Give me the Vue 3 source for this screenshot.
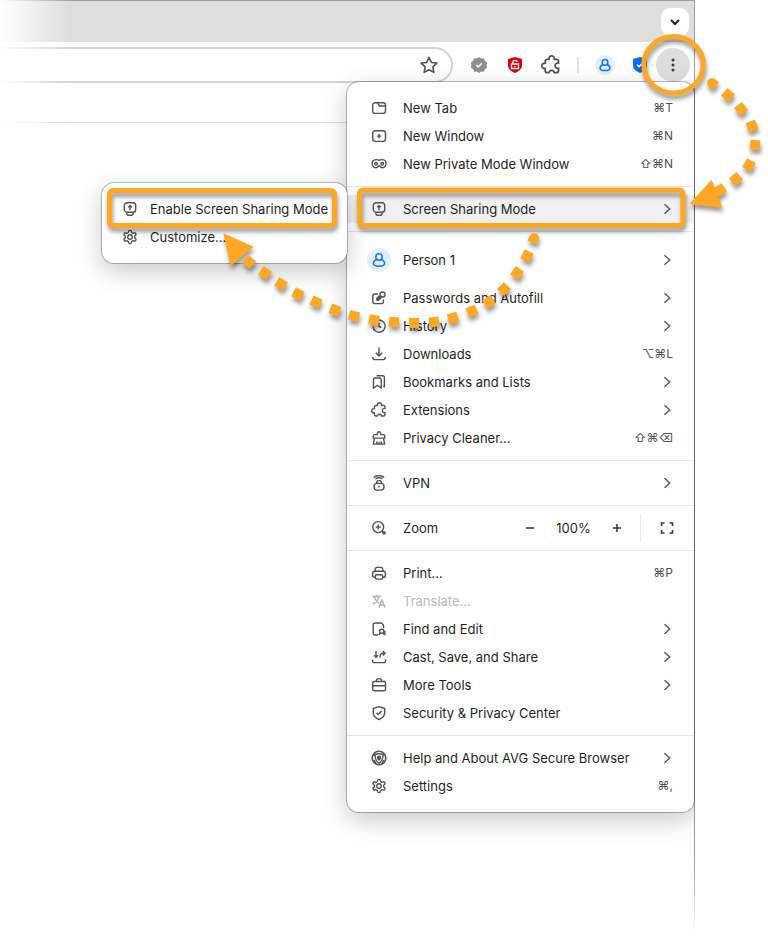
<script setup>
const icons = {
  tab: '<rect x="1.7" y="2.8" width="12.8" height="10.6" rx="2.4"/><path d="M6.5 2.9 8 5.4Q8.3 6 9 6h5.3"/>',
  window: '<rect x="1.7" y="2.8" width="12.8" height="10.6" rx="2.6"/><path d="M8.1 5.9v4.4M5.9 8.1h4.4"/>',
  mask: '<path d="M8.1 4.3C6.5 3.4 3.400 3.200 1.900 5c-1.200 1.600-.9 5 1 6.200 1.900 1.100 3.500.5 4.300-.8q.9-1.200 1.800 0c.8 1.300 2.400 1.900 4.300.8 1.900-1.200 2.200-4.600 1-6.200-1.500-1.800-4.600-1.600-6.200-.7z"/><circle cx="5" cy="7.800" r="1.300"/><circle cx="11.200" cy="7.800" r="1.300"/>',
  share: '<rect x="2.300" y="1.700" width="11.400" height="9.500" rx="2.800"/><path d="M4.600 11.500l.5 1.900q.2.800 1 .8h3.800q.8 0 1-.8l.5-1.900M8 9.200V4.600M6.200 6.200 8 4.400l1.800 1.800"/>',
  gear: '<g transform="scale(.6667)" stroke-width="2"><path d="M12.220 2h-.44a2 2 0 0 0-2 2v.18a2 2 0 0 1-1 1.730l-.43.25a2 2 0 0 1-2 0l-.15-.08a2 2 0 0 0-2.730.73l-.22.38a2 2 0 0 0 .73 2.730l.15.1a2 2 0 0 1 1 1.720v.51a2 2 0 0 1-1 1.740l-.15.09a2 2 0 0 0-.73 2.730l.22.38a2 2 0 0 0 2.730.73l.15-.08a2 2 0 0 1 2 0l.43.25a2 2 0 0 1 1 1.730V20a2 2 0 0 0 2 2h.44a2 2 0 0 0 2-2v-.18a2 2 0 0 1 1-1.730l.43-.25a2 2 0 0 1 2 0l.15.08a2 2 0 0 0 2.730-.73l.22-.39a2 2 0 0 0-.73-2.730l-.15-.08a2 2 0 0 1-1-1.740v-.5a2 2 0 0 1 1-1.740l.15-.09a2 2 0 0 0 .73-2.730l-.22-.38a2 2 0 0 0-2.730-.73l-.15.08a2 2 0 0 1-2 0l-.43-.25a2 2 0 0 1-1-1.730V4a2 2 0 0 0-2-2z"/><circle cx="12" cy="12" r="3.400"/></g>',
  person: '<circle cx="8" cy="5" r="3.200"/><path d="M5.700 7.400C3.500 8.400 2.400 10 2.400 11.600 2.400 13.700 5 14.300 8 14.300s5.600-.6 5.600-2.700c0-1.600-1.100-3.200-3.300-4.200"/>',
  key: '<path d="M7 4H4Q1.800 4 1.800 6.200v5.200q0 2.200 2.200 2.200h6.200q2.200 0 2.200-2.200V9.500M5.700 10.200 10 5.900M5.700 10.200l.2-1.900 2.800-2.700M5.700 10.200l2-.1 2.600-2.600"/><circle cx="11.600" cy="4.500" r="2.500"/>',
  history: '<path d="M3.200 4.400A6.100 6.100 0 1 1 2 8.600M2.400 2.600l.5 2.300 2.300-.2M8 4.800v3.600l2.300 1.300"/>',
  download: '<path d="M8 1.500v8.200M4.700 6.700 8 9.900l3.300-3.200M1.800 11v.6q0 2 2 2h8.400q2 0 2-2V11"/>',
  bookmarks: '<path d="M2.500 5.600q0-1.600 1.600-1.600h4.500q1.600 0 1.600 1.600v8.700l-3.800-3-3.900 3zM5.600 1.700h6q1.800 0 1.800 1.800v9.200l-1.200-.9"/>',
  puzzle: '<path d="M3.400 5q0-1.500 1.500-1.500h1.600a2.100 2.100 0 1 1 4 0H12.500q1.500 0 1.500 1.500v1.500a2.100 2.100 0 1 0 0 4v2q0 1.500-1.500 1.500h-2q-.2-1.700-2-1.700T6.500 14H4.900q-1.500 0-1.500-1.500v-1.800a2.100 2.100 0 1 1 0-4z"/>',
  cleaner: '<path d="M6.400 4.600V3.300q0-1.500 1.600-1.500t1.600 1.500v1.300h2.600q1.600 0 1.600 1.600v1.900H2.200V6.200q0-1.600 1.600-1.600zM3.400 8.300l-1 5.800h11.200l-1-5.800M5.600 13.900l.4-2.500M8 13.900v-2.200M10.400 13.900l-.4-2.500"/>',
  vpn: '<rect x="3" y="8.400" width="10" height="6.700" rx="3"/><path d="M5.700 8.300V7.200q0-1.600 2.300-1.600t2.300 1.600v1.100M4.400 4q3.600-2.400 7.200 0M2.800 2.400q5.200-3.500 10.400 0M8 11v1.600"/>',
  zoom: '<circle cx="7.200" cy="7.100" r="5.500"/><path d="M7.200 4.600v5M4.700 7.100h5M11.100 11l1.200 1.200"/><circle cx="13" cy="12.900" r="1.100"/>',
  print: '<path d="M3.800 6.200Q4.200 2.400 6 2.400h4q1.800 0 2.200 3.800M4.300 12.300H3.500q-1.900 0-1.900-1.900V8.100q0-1.900 1.900-1.900h9q1.900 0 1.900 1.900v2.300q0 1.900-1.900 1.900h-.8"/><rect x="4.300" y="9.700" width="7.400" height="4.400" rx="1.500"/>',
  translate: '<path d="M1.300 3.500h8.500M5.500 1.800v1.700M8 3.600C7.300 6.600 4.700 9.400 1.800 11M3.200 3.700c.8 2.600 2.800 5.100 5 6.400M7.800 14.400l3-7.600 3.300 7.600M8.900 12h4.100"/>',
  find: '<path d="M7 14H4.200q-2 0-2-2V4q0-2 2-2h5.200q1.300 0 2.100.9l.5.600q.6.800.6 1.700v2"/><circle cx="10.700" cy="10.300" r="2.100"/><path d="M9.300 12.200 7.700 14M12.100 12.100l1.700 2M13.800 9.500v4.500"/>',
  cast: '<path d="M5 2v6M3 6.300l2 2 2-2M9.200 8.500V7q0-2.700 2.700-2.700h2M11.800 2.100l2.300 2.200-2.300 2.200M1.600 10.600v.8q0 2.200 2.200 2.200h8.600q2.200 0 2.200-2.200v-.8"/>',
  tools: '<rect x="1.700" y="4.500" width="12.800" height="9.300" rx="1.600"/><path d="M5.300 4.300q0-2.400 1.400-2.400h2.600q1.400 0 1.400 2.400M1.800 8.700h12.600"/>',
  shield: '<path d="M8 1.600 13.700 3.500v4.200c0 3.200-2.500 5.500-5.700 6.800-3.200-1.300-5.700-3.600-5.700-6.800V3.500zM5.600 7.700l1.700 1.700 3.300-3.400"/>',
  avg: '<circle cx="8" cy="8" r="6.800" stroke-width="1.600"/><path d="M2.300 5.500q2-1.800 5.700-1.800t5.700 1.800M4 5c.2 4.500 1 6.400 4 8.200 3-1.800 3.800-3.700 4-8.200M3.200 10l2 3.800M12.800 10l-2 3.800M8 6.500v3.500M6.700 6.500v2l1.300 1.500 1.300-1.500v-2z"/>',
  star: '<path d="M8 1.200l2.100 4.500 4.900.6-3.600 3.400.9 4.900L8 12.200l-4.300 2.400.9-4.900L1 6.300l4.900-.6z"/>'
}

const groups = [
  [
    { icon: 'tab', label: 'New Tab', keys: '⌘T' },
    { icon: 'window', label: 'New Window', keys: '⌘N' },
    { icon: 'mask', label: 'New Private Mode Window', keys: '⇧⌘N' }
  ],
  [{ icon: 'share', label: 'Screen Sharing Mode', sub: true, active: true }],
  [
    { icon: 'person', label: 'Person 1', sub: true, profile: true },
    { icon: 'key', label: 'Passwords and Autofill', sub: true },
    { icon: 'history', label: 'History', sub: true },
    { icon: 'download', label: 'Downloads', keys: '⌥⌘L' },
    { icon: 'bookmarks', label: 'Bookmarks and Lists', sub: true },
    { icon: 'puzzle', label: 'Extensions', sub: true },
    { icon: 'cleaner', label: 'Privacy Cleaner…', keys: '⇧⌘⌫' }
  ],
  [{ icon: 'vpn', label: 'VPN', sub: true }],
  [{ icon: 'zoom', label: 'Zoom', zoom: true }],
  [
    { icon: 'print', label: 'Print…', keys: '⌘P' },
    { icon: 'translate', label: 'Translate…', disabled: true },
    { icon: 'find', label: 'Find and Edit', sub: true },
    { icon: 'cast', label: 'Cast, Save, and Share', sub: true },
    { icon: 'tools', label: 'More Tools', sub: true },
    { icon: 'shield', label: 'Security & Privacy Center' }
  ],
  [
    { icon: 'avg', label: 'Help and About AVG Secure Browser', sub: true },
    { icon: 'gear', label: 'Settings', keys: '⌘,' }
  ]
]

const submenu = [
  { icon: 'share', label: 'Enable Screen Sharing Mode' },
  { icon: 'gear', label: 'Customize…' }
]

// Each trail is a row of square dashes, turned to follow the line through its neighbours.
const trails = [
  [[712, 83], [728, 95], [741, 109], [752, 126], [755, 145], [749, 165], [736, 179], [720, 190], [704, 198]],
  [[534, 238], [527, 256], [517, 273], [504, 289], [489, 302], [472, 311], [453, 318], [434, 322], [414, 323],
    [394, 322], [374, 320], [354, 316], [335, 310], [316, 302], [298, 294], [281, 284], [265, 273], [249, 262], [236, 248]]
]
const dashes = trails.flatMap(points =>
  points.slice(0, -1).map(([x, y], i) => {
    const from = points[Math.max(i - 1, 0)]
    const to = points[i + 1]
    const angle = Math.atan2(to[1] - from[1], to[0] - from[0]) * 180 / Math.PI
    return { first: i === 0, transform: `translate(${x} ${y}) rotate(${angle.toFixed(1)})` }
  })
)
</script>

<template>
  <main class="page">
    <div class="browser">
      <div class="chrome">
        <div class="tabstrip">
          <button class="tab-search" aria-label="Search tabs">
            <svg viewBox="0 0 12 12" width="12" height="12"><path d="M2 4l4 4 4-4" /></svg>
          </button>
        </div>
        <div class="toolbar">
          <div class="address">
            <button class="tool" aria-label="Bookmark this page">
              <svg class="icon star" viewBox="0 0 16 16" v-html="icons.star"></svg>
            </button>
          </div>
          <button class="tool" aria-label="Verified site">
            <svg viewBox="0 0 18 18" width="18" height="18">
              <path d="M9 1l2.200 1.600 2.700-.3.900 2.500 2.300 1.400L16.600 9l.5 2.800-2.300 1.400-.9 2.500-2.700-.3L9 17l-2.200-1.600-2.700.3-.9-2.500L.9 11.800 1.400 9 .9 6.200l2.300-1.400.9-2.500 2.700.3z" fill="#8f8f8f" />
              <path d="M6.200 9l2 2 3.700-3.800" fill="none" stroke="#fff" stroke-width="1.400" />
            </svg>
          </button>
          <button class="tool" aria-label="Site protection">
            <svg viewBox="0 0 18 18" width="18" height="18">
              <path d="M9 1 16 3v6.200c0 3.400-2.700 6-7 7.800-4.300-1.800-7-4.400-7-7.800V3z" fill="#e3000f" />
              <path d="M6.800 8V6.500C6.800 3.800 11 3.700 11.200 6M5.500 8h7v4.500h-7zM9 9.700v1.200" fill="none" stroke="#fff" stroke-width="1.300" />
            </svg>
          </button>
          <button class="tool" aria-label="Extensions">
            <svg class="icon large" viewBox="0 0 16 16" v-html="icons.puzzle"></svg>
          </button>
          <span class="tool-divider"></span>
          <button class="tool" aria-label="Profile">
            <span class="avatar"><svg class="icon person" viewBox="0 0 16 16" v-html="icons.person"></svg></span>
          </button>
          <button class="tool narrow" aria-label="Security center">
            <svg viewBox="0 0 18 18" width="18" height="18">
              <path d="M9 1 16 3v6.200c0 3.400-2.700 6-7 7.800-4.300-1.800-7-4.400-7-7.800V3z" fill="#0a6cf5" />
              <path d="M6 8.700l2 2 4-4" fill="none" stroke="#fff" stroke-width="1.500" />
            </svg>
          </button>
          <button class="more" aria-label="Menu">
            <svg viewBox="0 0 4 14" width="4" height="14">
              <circle cx="2" cy="2" r="1.500" /><circle cx="2" cy="7" r="1.500" /><circle cx="2" cy="12" r="1.500" />
            </svg>
          </button>
        </div>
        <div class="content"></div>
      </div>

      <nav class="menu main-menu" aria-label="Browser menu">
        <div v-for="(group, g) in groups" :key="g" class="group">
          <template v-for="item in group" :key="item.label">
            <div v-if="item.zoom" class="row">
              <svg class="icon" viewBox="0 0 16 16" v-html="icons[item.icon]"></svg>
              <span class="label">{{ item.label }}</span>
              <div class="zoom-controls">
                <button class="step" aria-label="Zoom out"><svg viewBox="0 0 10 10" width="10" height="10"><path d="M1 5h8" /></svg></button>
                <span class="level">100%</span>
                <button class="step" aria-label="Zoom in"><svg viewBox="0 0 10 10" width="10" height="10"><path d="M1 5h8M5 1v8" /></svg></button>
                <button class="full" aria-label="Full screen">
                  <svg viewBox="0 0 14 14" width="14" height="14"><path d="M1.500 5V2h3M9.500 2h3v3M12.500 9v3h-3M4.500 12h-3V9" /></svg>
                </button>
              </div>
            </div>
            <button v-else class="row" :class="{ active: item.active, profile: item.profile }" :disabled="item.disabled">
              <span v-if="item.profile" class="avatar big"><svg class="icon person" viewBox="0 0 16 16" v-html="icons.person"></svg></span>
              <svg v-else class="icon" viewBox="0 0 16 16" v-html="icons[item.icon]"></svg>
              <span class="label">{{ item.label }}</span>
              <span v-if="item.keys" class="keys">{{ item.keys }}</span>
              <svg v-if="item.sub" class="chevron" viewBox="0 0 12 12"><path d="M3.500 1.200 8.700 6l-5.200 4.800" /></svg>
            </button>
          </template>
        </div>
      </nav>

      <nav class="menu sub-menu" aria-label="Screen Sharing Mode">
        <button v-for="item in submenu" :key="item.label" class="row">
          <svg class="icon" viewBox="0 0 16 16" v-html="icons[item.icon]"></svg>
          <span class="label">{{ item.label }}</span>
        </button>
      </nav>
    </div>

    <svg class="callouts" viewBox="0 0 768 949" width="768" height="949" aria-hidden="true">
      <g class="outline">
        <ellipse cx="673.500" cy="64.800" rx="29.700" ry="28.200" />
        <rect x="359.500" y="190" width="323.500" height="35.500" rx="3.500" />
        <rect x="109.500" y="190.500" width="225" height="35" rx="3.500" />
      </g>
      <g class="solid">
        <template v-for="(d, i) in dashes" :key="i">
          <path v-if="d.first" :transform="d.transform" d="M5-5H0A5 5 0 0 0 0 5H5z" />
          <rect v-else :transform="d.transform" x="-5" y="-5" width="10" height="10" />
        </template>
        <path d="M689.300 204l22.400-24.300 10.600 28z" />
        <path d="M223.300 233.300l30.400 13.400-23 19.300z" />
      </g>
    </svg>
  </main>
</template>

<style>
body {
  margin: 0;
  background: #fff;
}
</style>

<style scoped>
.page {
  position: relative;
  min-height: 100vh;
  overflow: hidden;
  font-family: Inter, "Liberation Sans", sans-serif;
  font-size: 13px;
  line-height: 20px;
  color: #1f1f1f;
}
button {
  margin: 0;
  padding: 0;
  border: 0;
  background: none;
  font: inherit;
  color: inherit;
}
.browser {
  position: relative;
  margin-right: 73px;
  overflow: hidden;
}
.chrome {
  display: flex;
  flex-direction: column;
  min-height: 100vh;
  box-sizing: border-box;
  border-top: 1px solid #a0a0a0;
  border-right: 1px solid #9c9c9c;
  mask-image: linear-gradient(to right, transparent, #000 70px), linear-gradient(to top, transparent 16px, #000 90px);
  mask-composite: intersect;
}
.tabstrip {
  display: flex;
  justify-content: flex-end;
  padding: 7px 5px 6px;
  background: #dedede;
}
.tab-search {
  display: grid;
  place-items: center;
  width: 28px;
  height: 28px;
  border-radius: 9px;
  background: #fff;
}
.tab-search svg {
  fill: none;
  stroke: #1f1f1f;
  stroke-width: 2;
}
.toolbar {
  display: flex;
  align-items: center;
  height: 36px;
  padding: 5px 4px 39px 0;
  border-bottom: 1px solid #dcdce0;
}
.address {
  display: flex;
  flex: 1;
  justify-content: flex-end;
  align-items: center;
  box-sizing: border-box;
  height: 36px;
  margin-right: 8px;
  padding-right: 4px;
  border: 2px solid #d1d3dd;
  border-left: 0;
  border-radius: 0 18px 18px 0;
}
.tool {
  display: grid;
  place-items: center;
  width: 36px;
  height: 32px;
}
.narrow {
  width: 33px;
}
.tool-divider {
  width: 2px;
  height: 16px;
  margin: 0 8px;
  background: #e2e2e4;
}
.more {
  display: grid;
  place-items: center;
  width: 34px;
  height: 34px;
  border-radius: 50%;
  background: #dedede;
}
.more svg {
  fill: #3c3c3c;
}
.content {
  flex: 1;
}
.icon {
  flex: none;
  width: 16px;
  height: 16px;
  fill: none;
  stroke: #525252;
  stroke-width: 1.4;
  stroke-linejoin: round;
}
.icon.star {
  width: 18px;
  height: 18px;
}
.icon.large {
  width: 20px;
  height: 20px;
}
.avatar {
  display: grid;
  place-items: center;
  width: 20px;
  height: 20px;
  border-radius: 50%;
  background: #e3effd;
}
.avatar .person {
  width: 14px;
  height: 14px;
  stroke: #1373e6;
  stroke-width: 1.8;
}
.avatar.big {
  width: 24px;
  height: 24px;
  margin: 0 -4px;
}
.avatar.big .person {
  width: 16px;
  height: 16px;
  stroke-width: 1.5;
}
.menu {
  position: absolute;
  box-sizing: border-box;
  padding: 12px 0;
  border-radius: 12px;
  background: #fff;
  box-shadow: 0 0 0 1px rgba(0, 0, 0, 0.26), 0 8px 24px rgba(0, 0, 0, 0.22);
}
.main-menu {
  top: 82px;
  right: 1px;
  width: 347px;
}
.sub-menu {
  top: 183px;
  right: 348px;
  width: 245px;
}
.group + .group {
  margin-top: 8px;
  padding-top: 8px;
  border-top: 1px solid #e6e6e6;
}
.row {
  display: flex;
  align-items: center;
  gap: 16px;
  box-sizing: border-box;
  width: 100%;
  height: 28px;
  padding: 0 21px 0 24px;
  text-align: left;
  white-space: nowrap;
}
.sub-menu .row {
  padding: 0 20px;
  gap: 12px;
}
.row.active {
  background: #f0f0f0;
}
.row.profile {
  height: 40px;
  margin-bottom: 4px;
}
.row:disabled {
  color: #b9b9b9;
}
.row:disabled .icon {
  stroke: #b0b0b0;
}
.label {
  flex: 1;
}
.keys {
  font-size: 12px;
  color: #505050;
}
.chevron {
  width: 12px;
  height: 12px;
  fill: none;
  stroke: #5a5a5a;
  stroke-width: 1.5;
}
.zoom-controls {
  display: flex;
  align-items: center;
  margin-right: -1px;
}
.step {
  display: grid;
  place-items: center;
  width: 24px;
  height: 24px;
}
.step svg,
.full svg {
  fill: none;
  stroke: #3a3a3a;
  stroke-width: 1.6;
}
.level {
  width: 63px;
  text-align: center;
}
.full {
  display: grid;
  justify-items: end;
  align-items: center;
  width: 34px;
  height: 28px;
  margin-left: 11px;
  border-left: 1px solid #e6e6e6;
}
.callouts {
  position: absolute;
  top: 0;
  right: 0;
  pointer-events: none;
}
.outline {
  fill: none;
  stroke: #ffa722;
  stroke-width: 5;
  filter: drop-shadow(1px 4px 2px rgba(0, 0, 0, 0.4));
}
.solid {
  fill: #ffa722;
  filter: drop-shadow(1px 4px 2px rgba(0, 0, 0, 0.4));
}
</style>
